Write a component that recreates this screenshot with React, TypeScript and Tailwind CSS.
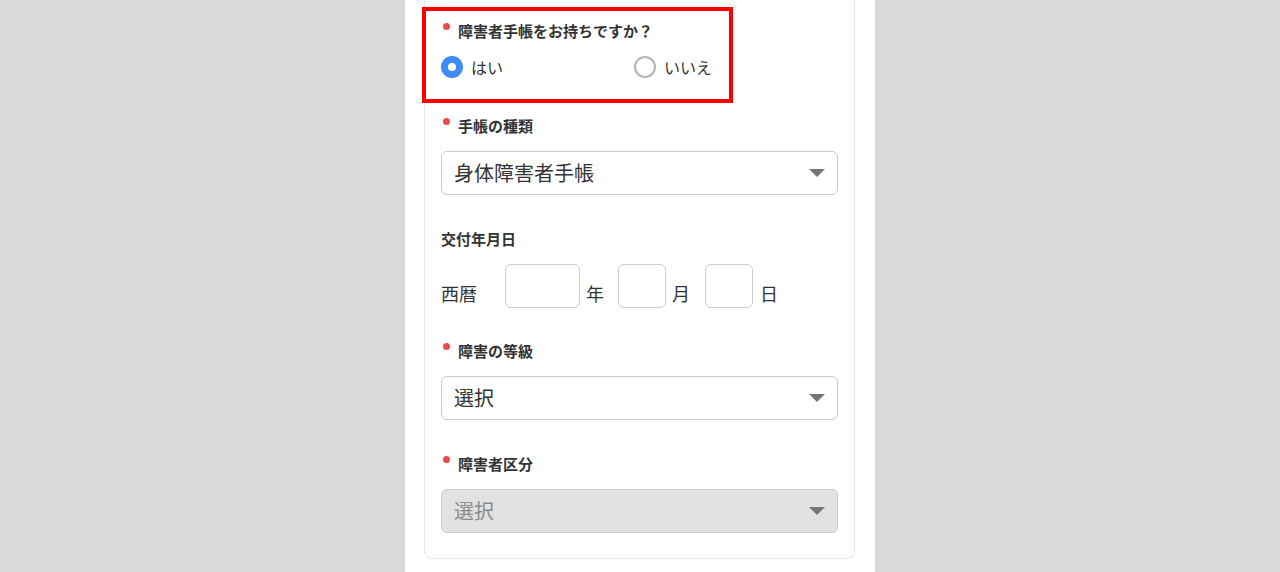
import { useState } from "react";

const font = { fontFamily: '"Noto Sans CJK JP", "Noto Sans", sans-serif' };

function Label({ text, required = true }: { text: string; required?: boolean }) {
  return (
    <div className="flex items-start h-[22px] leading-[22px] text-[15px] font-bold text-[#333]">
      {required && <span className="mt-[3px] ml-[2px] mr-[8px] w-[7px] h-[7px] rounded-full bg-[#e84c4c] shrink-0" />}
      <span>{text}</span>
    </div>
  );
}

function Arrow() {
  return (
    <svg width="16" height="8" viewBox="0 0 16 8" className="shrink-0">
      <path d="M0 0 L16 0 L8 8 Z" fill="#757575" />
    </svg>
  );
}

function SelectBox({ value, disabled = false }: { value: string; disabled?: boolean }) {
  return (
    <div
      className={
        disabled
          ? "mt-[14px] h-[44px] flex items-center justify-between pl-[12px] pr-[12px] rounded-md border border-[#c9c9c9] bg-[#e2e2e2] text-[20px] text-[#8a8a8a]"
          : "mt-[14px] h-[44px] flex items-center justify-between pl-[12px] pr-[12px] rounded-md border border-[#c9c9c9] bg-white text-[20px] text-[#333]"
      }
    >
      <span className="leading-none">{value}</span>
      <Arrow />
    </div>
  );
}

function Radio({ checked, label, onClick }: { checked: boolean; label: string; onClick: () => void }) {
  return (
    <button type="button" onClick={onClick} className="flex items-center h-[22px]">
      {checked ? (
        <span className="w-[22px] h-[22px] rounded-full bg-[#3d8bf5] flex items-center justify-center">
          <span className="w-[8px] h-[8px] rounded-full bg-white" />
        </span>
      ) : (
        <span className="w-[22px] h-[22px] rounded-full border-2 border-[#b5b5b5] bg-white" />
      )}
      <span className="ml-[8px] text-[16px] text-[#333] leading-none">{label}</span>
    </button>
  );
}

export default function App() {
  const [hasCard, setHasCard] = useState(true);

  return (
    <div className="min-h-[572px] w-full bg-[#d9d9d9] flex justify-center" style={font}>
      <div className="w-[470px] bg-white pl-[19px] pr-[20px] pb-[13px]">
        <div className="border-x border-b border-[#e6e6e6] rounded-b-lg px-4 pt-5 pb-[25px]">
          {/* お持ちですか */}
          <div className="relative">
            <div className="absolute left-[-19px] top-[-13px] w-[311px] h-[96px] border-4 border-[#ff0000] pointer-events-none" />
            <Label text="障害者手帳をお持ちですか？" />
            <div className="mt-[14px] flex">
              <div className="w-[193px]">
                <Radio checked={hasCard} label="はい" onClick={() => setHasCard(true)} />
              </div>
              <Radio checked={!hasCard} label="いいえ" onClick={() => setHasCard(false)} />
            </div>
          </div>

          <div className="mt-[37px]">
            <Label text="手帳の種類" />
            <SelectBox value="身体障害者手帳" />
          </div>

          <div className="mt-[33px]">
            <Label text="交付年月日" required={false} />
            <div className="mt-[14px] flex items-center text-[18px] text-[#333]">
              <span className="w-[64px] mt-[13px] leading-none">西暦</span>
              <input className="w-[75px] h-[44px] rounded-md border border-[#cccccc] outline-none px-2" />
              <span className="ml-[6px] mt-[13px] leading-none">年</span>
              <input className="ml-[14px] w-[48px] h-[44px] rounded-md border border-[#cccccc] outline-none px-2" />
              <span className="ml-[6px] mt-[13px] leading-none">月</span>
              <input className="ml-[15px] w-[48px] h-[44px] rounded-md border border-[#cccccc] outline-none px-2" />
              <span className="ml-[7px] mt-[13px] leading-none">日</span>
            </div>
          </div>

          <div className="mt-[32px]">
            <Label text="障害の等級" />
            <SelectBox value="選択" />
          </div>

          <div className="mt-[33px]">
            <Label text="障害者区分" />
            <SelectBox value="選択" disabled />
          </div>
        </div>
      </div>
    </div>
  );
}
